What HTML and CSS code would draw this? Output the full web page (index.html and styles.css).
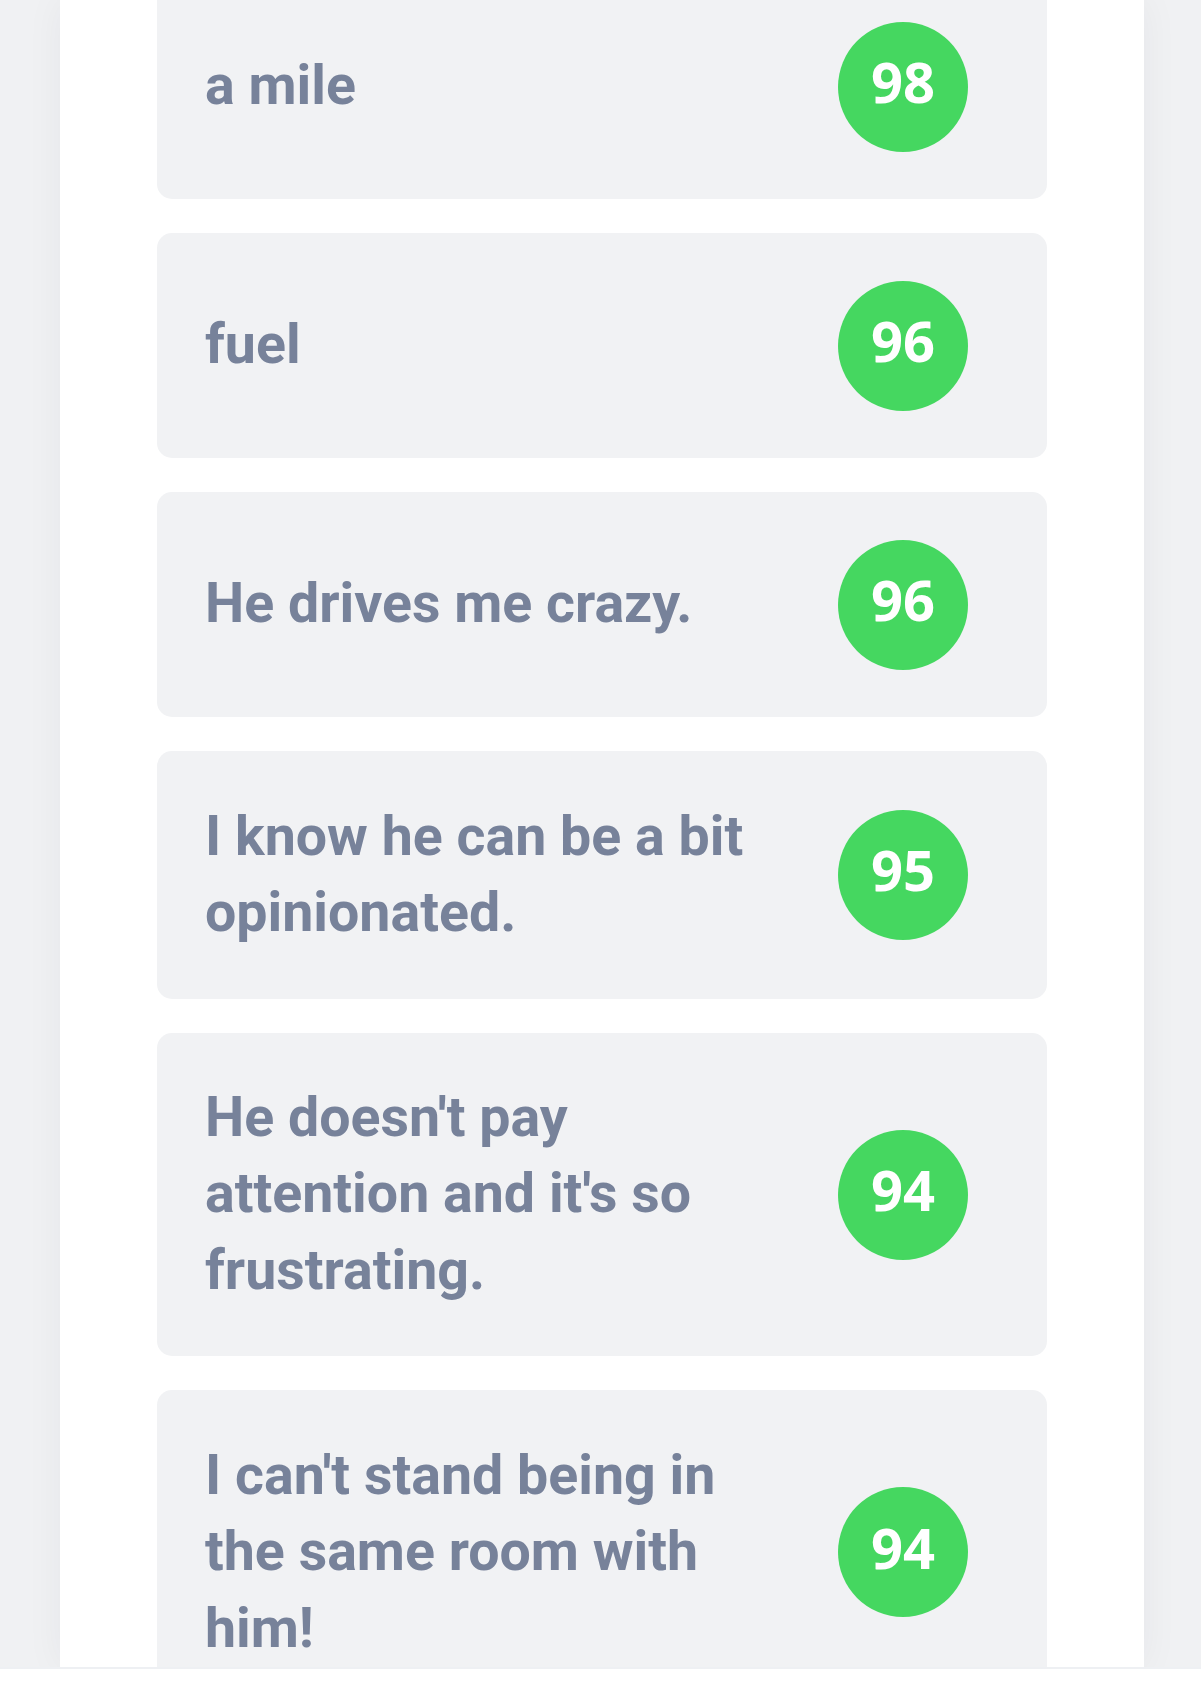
FILE: index.html
```html
<!DOCTYPE html>
<html lang="en">
<head>
<meta charset="utf-8">
<title>Scores</title>
<link rel="stylesheet" href="styles.css">
</head>
<body>
<div class="viewport">
  <main class="panel">
    <ul class="list">
      <li class="card"><p class="phrase">a mile</p><span class="score">98</span></li>
      <li class="card"><p class="phrase">fuel</p><span class="score">96</span></li>
      <li class="card"><p class="phrase">He drives me crazy.</p><span class="score">96</span></li>
      <li class="card"><p class="phrase">I know he can be a bit opinionated.</p><span class="score">95</span></li>
      <li class="card"><p class="phrase">He doesn't pay attention and it's so frustrating.</p><span class="score">94</span></li>
      <li class="card"><p class="phrase">I can't stand being in the same room with him!</p><span class="score">94</span></li>
    </ul>
  </main>
</div>
</body>
</html>
```
FILE: styles.css
```css
html, body {
  margin: 0;
  padding: 0;
  background: #ffffff;
}

.viewport {
  height: 1667px;
  overflow: hidden;
  background: #f0f1f3;
  padding-left: 60px;
  border-bottom: 2px solid #eef0f3;
  box-sizing: content-box;
}

.panel {
  width: 1084px;
  height: 100%;
  background: #ffffff;
  box-shadow: 0 0 36px rgba(20, 30, 50, 0.05);
  padding: 0 97px;
  box-sizing: border-box;
  overflow: hidden;
}

.list {
  list-style: none;
  margin: -26px 0 0 0;
  padding: 0;
  display: flex;
  flex-direction: column;
  gap: 34px;
}

.card {
  display: flex;
  align-items: center;
  gap: 60px;
  background: #f1f2f4;
  border-radius: 15px;
  padding: 47.5px 79px 47.5px 48px;
}

.phrase {
  flex: 1;
  margin: 0;
  font-family: Roboto, "Liberation Sans", sans-serif;
  font-weight: 700;
  font-size: 55.5px;
  line-height: 76.3px;
  color: #77829a;
}

.score {
  flex: none;
  width: 130px;
  height: 130px;
  border-radius: 50%;
  background: #45d760;
  color: #ffffff;
  display: flex;
  align-items: center;
  justify-content: center;
  box-sizing: border-box;
  padding-bottom: 11px;
  font-family: "Open Sans", "Noto Sans", sans-serif;
  font-weight: 700;
  font-size: 56px;
  line-height: 1;
}
```
